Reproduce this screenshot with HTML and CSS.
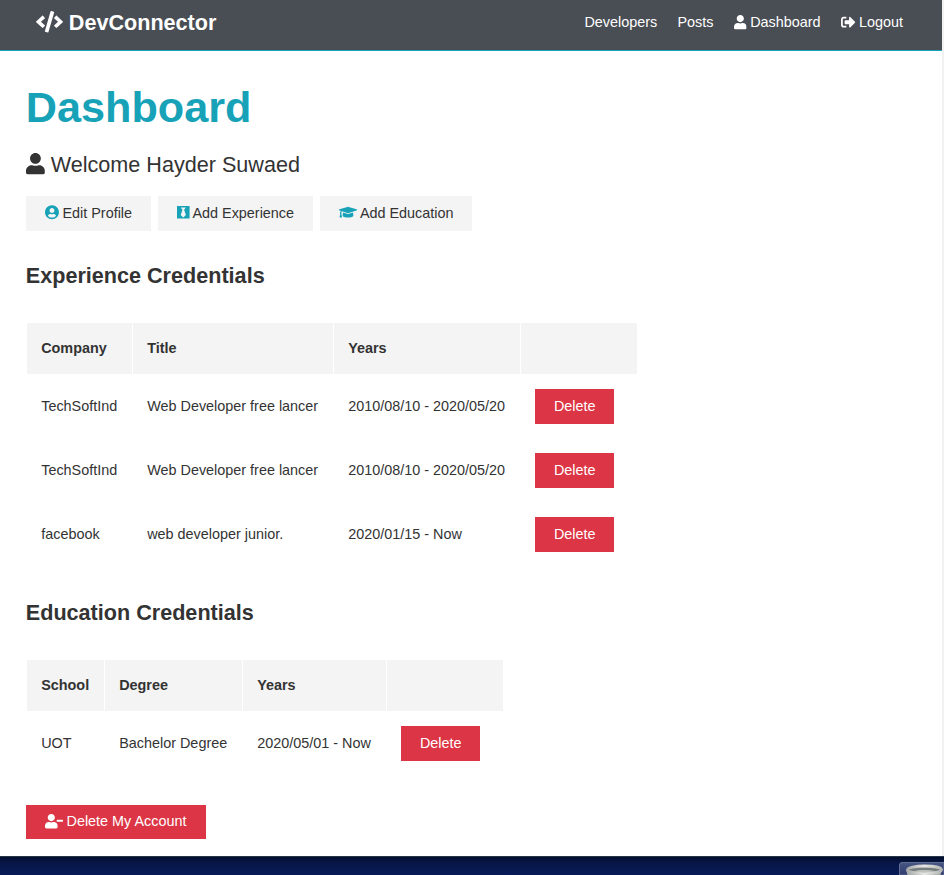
FILE: index.html
```html
<!DOCTYPE html>
<html lang="en">
<head>
<meta charset="utf-8">
<title>DevConnector</title>
<link rel="stylesheet" href="styles.css">
</head>
<body>
<svg class="sprite" aria-hidden="true">
  <symbol id="user" viewBox="0 0 448 512"><path d="M224 256c70.7 0 128-57.3 128-128S294.7 0 224 0 96 57.3 96 128s57.3 128 128 128zm89.6 32h-16.7c-22.2 10.2-46.9 16-72.9 16s-50.6-5.8-72.9-16h-16.7C60.2 288 0 348.2 0 422.4V464c0 26.5 21.5 48 48 48h352c26.5 0 48-21.5 48-48v-41.6c0-74.2-60.2-134.4-134.4-134.4z"/></symbol>
</svg>
<div class="browser">
  <div class="page">
    <nav class="navbar">
      <a class="brand"><svg class="icon w640" viewBox="0 0 640 512"><path d="M278.9 511.5l-61-17.7c-6.4-1.8-10-8.5-8.2-14.9L346.2 8.7c1.8-6.4 8.5-10 14.9-8.2l61 17.7c6.4 1.8 10 8.5 8.2 14.9L293.8 503.3c-1.9 6.4-8.5 10.1-14.9 8.2zm-114-112.2l43.5-46.4c4.6-4.9 4.3-12.7-.8-17.2L117 256l90.6-79.7c5.1-4.5 5.5-12.3.8-17.2l-43.5-46.4c-4.5-4.8-12.1-5.1-17-.5L3.8 247.2c-5.1 4.7-5.1 12.8 0 17.5l144.1 135.1c4.9 4.6 12.5 4.4 17-.5zm327.2.6l144.1-135.1c5.1-4.7 5.1-12.8 0-17.5L492.1 112.1c-4.8-4.5-12.4-4.3-17 .5L431.6 159c-4.6 4.9-4.3 12.7.8 17.2L523 256l-90.6 79.7c-5.1 4.5-5.5 12.3-.8 17.2l43.5 46.4c4.5 4.9 12.1 5.1 17 .6z"/></svg> DevConnector</a>
      <ul class="links">
        <li>Developers</li>
        <li>Posts</li>
        <li><svg class="icon w448"><use href="#user"/></svg> Dashboard</li>
        <li><svg class="icon w512" viewBox="0 0 512 512"><path d="M497 273L329 441c-15 15-41 4.5-41-17v-96H152c-13.3 0-24-10.7-24-24v-96c0-13.3 10.7-24 24-24h136V88c0-21.4 25.9-32 41-17l168 168c9.3 9.4 9.3 24.6 0 34zM192 436v-40c0-6.6-5.4-12-12-12H96c-17.7 0-32-14.3-32-32V160c0-17.7 14.3-32 32-32h84c6.6 0 12-5.4 12-12V76c0-6.6-5.4-12-12-12H96c-53 0-96 43-96 96v192c0 53 43 96 96 96h84c6.6 0 12-5.4 12-12z"/></svg> Logout</li>
      </ul>
    </nav>
    <main class="container">
      <h1>Dashboard</h1>
      <p class="lead"><svg class="icon w448"><use href="#user"/></svg> Welcome Hayder Suwaed</p>
      <div class="actions">
        <a class="btn light"><svg class="icon w496" viewBox="0 0 496 512"><path d="M248 8C111 8 0 119 0 256s111 248 248 248 248-111 248-248S385 8 248 8zm0 96c48.6 0 88 39.4 88 88s-39.4 88-88 88-88-39.4-88-88 39.4-88 88-88zm0 344c-58.7 0-111.3-26.6-146.5-68.2 18.8-35.4 55.6-59.8 98.5-59.8 2.4 0 4.8.4 7.1 1.1 13 4.2 26.6 6.9 40.9 6.9s28-2.7 40.9-6.9c2.3-.7 4.7-1.1 7.1-1.1 42.9 0 79.7 24.4 98.5 59.8C359.3 421.4 306.7 448 248 448z"/></svg> Edit Profile</a>
        <a class="btn light"><svg class="icon w448" viewBox="0 0 448 512"><path d="M0 32v448h448V32H0zm316.5 325.2L224 445.9l-92.5-88.7 64.5-184-64.5-86.6h184.9L252 173.2l64.5 184z"/></svg> Add Experience</a>
        <a class="btn light"><svg class="icon w640" viewBox="0 0 640 512"><path d="M622.34 153.2L343.4 67.5c-15.2-4.67-31.6-4.67-46.79 0L17.66 153.2c-23.54 7.23-23.54 38.36 0 45.59l48.63 14.94c-10.67 13.19-17.23 29.28-17.88 46.9C38.78 266.15 32 276.11 32 288c0 10.78 5.68 19.85 13.86 25.65L20.33 428.53C18.11 438.52 25.71 448 35.94 448h56.11c10.24 0 17.84-9.48 15.62-19.47L82.14 313.65C90.32 307.85 96 298.78 96 288c0-11.57-6.47-21.25-15.66-26.87.76-15.02 8.44-28.3 20.69-36.72L296.6 284.5c9.06 2.78 26.44 6.25 46.79 0l278.95-85.7c23.55-7.24 23.55-38.36 0-45.6zM352.79 315.09c-28.53 8.76-52.84 3.92-65.59 0l-145.02-44.55L128 384c0 35.35 85.96 64 192 64s192-28.65 192-64l-14.18-113.47-145.03 44.56z"/></svg> Add Education</a>
      </div>

      <h2>Experience Credentials</h2>
      <table class="experience">
        <colgroup><col class="company"><col class="title"><col class="years"><col class="action"></colgroup>
        <thead><tr><th>Company</th><th>Title</th><th>Years</th><th></th></tr></thead>
        <tbody>
          <tr><td>TechSoftInd</td><td>Web Developer free lancer</td><td>2010/08/10 - 2020/05/20</td><td><a class="btn danger">Delete</a></td></tr>
          <tr><td>TechSoftInd</td><td>Web Developer free lancer</td><td>2010/08/10 - 2020/05/20</td><td><a class="btn danger">Delete</a></td></tr>
          <tr><td>facebook</td><td>web developer junior.</td><td>2020/01/15 - Now</td><td><a class="btn danger">Delete</a></td></tr>
        </tbody>
      </table>

      <h2>Education Credentials</h2>
      <table class="education">
        <colgroup><col class="school"><col class="degree"><col class="years"><col class="action"></colgroup>
        <thead><tr><th>School</th><th>Degree</th><th>Years</th><th></th></tr></thead>
        <tbody>
          <tr><td>UOT</td><td>Bachelor Degree</td><td>2020/05/01 - Now</td><td><a class="btn danger">Delete</a></td></tr>
        </tbody>
      </table>

      <div class="account">
        <a class="btn danger"><svg class="icon w640" viewBox="0 0 640 512"><path d="M624 208H432c-8.8 0-16 7.2-16 16v32c0 8.8 7.2 16 16 16h192c8.8 0 16-7.2 16-16v-32c0-8.8-7.2-16-16-16zm-400 48c70.7 0 128-57.3 128-128S294.7 0 224 0 96 57.3 96 128s57.3 128 128 128zm89.6 32h-16.7c-22.2 10.2-46.9 16-72.9 16s-50.6-5.8-72.9-16h-16.7C60.2 288 0 348.2 0 422.4V464c0 26.5 21.5 48 48 48h352c26.5 0 48-21.5 48-48v-41.6c0-74.2-60.2-134.4-134.4-134.4z"/></svg> Delete My Account</a>
      </div>
    </main>
  </div>
  <div class="scrollbar"></div>
</div>
<div class="desktop">
  <svg class="trash" viewBox="0 0 45 13">
    <defs>
      <linearGradient id="tile" x2="0" y2="1"><stop offset="0" stop-color="#475684"/><stop offset="1" stop-color="#303c70"/></linearGradient>
      <linearGradient id="rim"><stop offset="0" stop-color="#a8aaa9"/><stop offset=".5" stop-color="#e8e9e5"/><stop offset="1" stop-color="#b4b6b3"/></linearGradient>
    </defs>
    <path d="M.5 13V3Q.5.5 3 .5H45V13Z" fill="url(#tile)" stroke="#646e92"/>
    <path d="M7 8 9 14H41L43 8Z" fill="#aeb2b0"/>
    <ellipse cx="25.5" cy="7.8" rx="17" ry="3.8" fill="#777e80" stroke="url(#rim)" stroke-width="2.8"/>
    <path d="M14 9.3Q25 6.5 37 9.3Q25 11.5 14 9.3Z" fill="#c0c4c0"/>
  </svg>
</div>
</body>
</html>
```
FILE: styles.css
```css
* { box-sizing: border-box; margin: 0; padding: 0; }
html { font-size: 14.4px; }
body {
  height: 875px;
  overflow: hidden;
  display: flex;
  flex-direction: column;
  font: 14.4px/1.6 "Liberation Sans", Arial, sans-serif;
  color: #333;
  background: #fff;
}
.sprite { display: none; }
.browser { display: flex; height: 856px; flex: none; }
.page { flex: 1; }
.scrollbar { width: 2px; background: #f1f1f1; }

.icon { height: 1em; vertical-align: -0.125em; fill: currentColor; overflow: visible; }
.w448 { width: 0.875em; }
.w496 { width: 0.96875em; }
.w512 { width: 1em; }
.w640 { width: 1.25em; }

.navbar {
  height: 51px;
  padding: 10px 38.9px 0 35.8px;
  display: flex;
  justify-content: space-between;
  align-items: flex-start;
  color: #fff;
  background: #494d54;
  border-bottom: 1px solid #17a2b8;
}
.brand { font-size: 21.6px; font-weight: bold; line-height: 25px; }
.links { display: flex; gap: 20.16px; margin-top: 1px; list-style: none; }
.links .icon { vertical-align: -0.19em; }

.container { padding: 31px 25.8px 0; }
h1 { font-size: 43.2px; line-height: 1.2; margin-bottom: 13.8px; color: #17a2b8; }
.lead { font-size: 21.6px; margin-bottom: 14px; }
.actions { display: flex; gap: 7.2px; }
.btn { display: inline-block; padding: 5.76px 18.72px; vertical-align: top; }
.light { background: #f4f4f4; }
.light .icon { color: #17a2b8; }
.danger { background: #dc3545; color: #fff; }
h2 { font-size: 21.6px; margin: 28.4px 0; }

table { table-layout: fixed; border-collapse: separate; border-spacing: 1px; }
.experience { width: 612px; }
.education { width: 478px; }
.company { width: 105px; }
.title { width: 200px; }
.experience .years { width: 186px; }
.school { width: 77px; }
.degree { width: 137px; }
.education .years { width: 143px; }
.action { width: 116px; }
th, td { padding: 0 14.4px; text-align: left; white-space: nowrap; }
th { height: 51px; background: #f4f4f4; }
td { height: 63px; }
.experience { margin-bottom: 29px; }
.account { margin-top: 28.5px; }
.account .btn { padding-right: 19.2px; }

.desktop {
  flex: 1;
  display: flex;
  justify-content: flex-end;
  align-items: flex-end;
  border-top: 1px solid #28364a;
  background: linear-gradient(#020d2c, #071647 6px, #081a59);
}
.trash { width: 45px; height: 13px; display: block; }
```
